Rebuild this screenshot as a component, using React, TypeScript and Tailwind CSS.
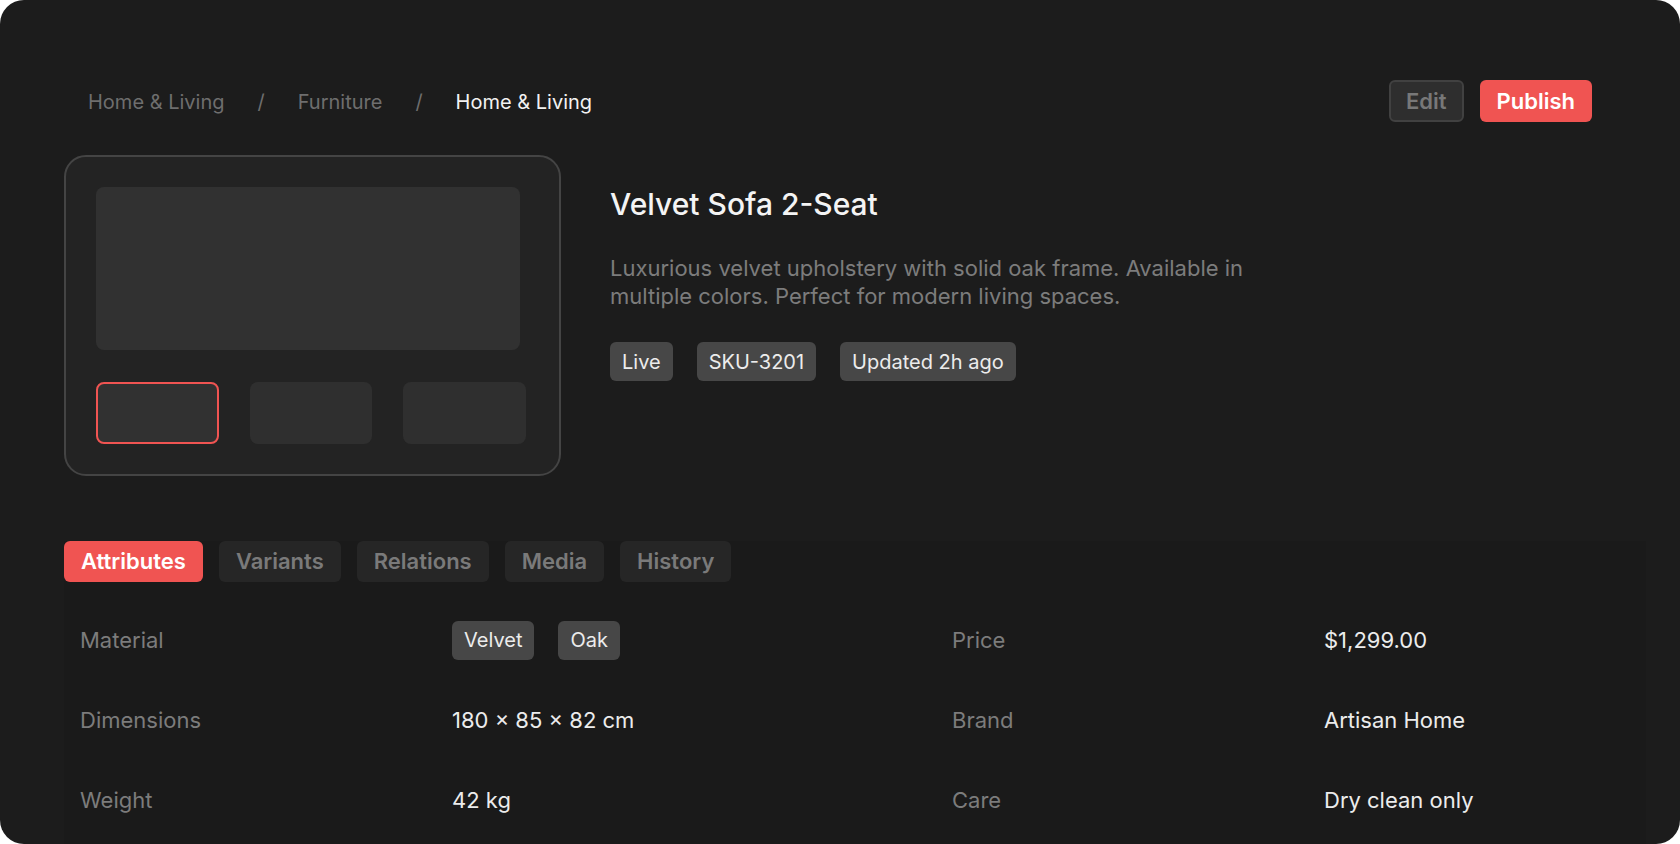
import React from "react";

const font = { fontFamily: "Inter, 'Noto Sans', sans-serif" };

function Tag({ children }: { children: React.ReactNode }) {
  return (
    <span className="inline-flex h-[39px] items-center rounded-[6px] bg-[#474747] px-3 text-[20px] text-[#ececec]">
      {children}
    </span>
  );
}

const rows = [
  { l1: "Material", v1: <div className="flex gap-6"><Tag>Velvet</Tag><Tag>Oak</Tag></div>, l2: "Price", v2: "$1,299.00" },
  { l1: "Dimensions", v1: "180 × 85 × 82 cm", l2: "Brand", v2: "Artisan Home" },
  { l1: "Weight", v1: "42 kg", l2: "Care", v2: "Dry clean only" },
];

export default function App() {
  return (
    <div className="h-[844px] w-[1680px] overflow-hidden bg-white" style={font}>
      <div className="flex h-full w-full flex-col overflow-hidden rounded-[24px] bg-[#1c1c1c] px-16 pt-[80px]">
        <div className="flex h-[42px] items-center justify-between">
          <div className="flex items-center gap-[33px] pl-6 pt-[2px] text-[20px]">
            <span className="text-[#6e6e6e]">Home &amp; Living</span>
            <span className="text-[#6e6e6e]">/</span>
            <span className="text-[#6e6e6e]">Furniture</span>
            <span className="text-[#6e6e6e]">/</span>
            <span className="text-[#f2f2f2]">Home &amp; Living</span>
          </div>
          <div className="flex items-center gap-4 pr-6">
            <button className="h-[42px] rounded-[6px] border-2 border-[#414141] bg-[#2e2e2e] px-[15px] text-[22px] font-semibold text-[#787878]">
              Edit
            </button>
            <button className="h-[42px] rounded-[6px] bg-[#f05452] px-[17px] text-[22px] font-semibold text-white">
              Publish
            </button>
          </div>
        </div>

        <div className="mt-[33px] flex gap-[49px]">
          <div className="flex w-[497px] flex-col gap-8 rounded-[22px] border-2 border-[#444444] bg-[#232323] p-[30px]">
            <div className="h-[163px] w-[424px] rounded-[8px] bg-[#313131]" />
            <div className="grid w-[430px] grid-cols-3 gap-[31px]">
              <div className="h-[62px] rounded-[8px] border-2 border-[#f05452] bg-[#313131]" />
              <div className="h-[62px] rounded-[8px] bg-[#2f2f2f]" />
              <div className="h-[62px] rounded-[8px] bg-[#2f2f2f]" />
            </div>
          </div>
          <div className="flex flex-col gap-8 pt-[31px]">
            <h1 className="text-[30px] font-medium leading-[36px] text-[#f4f4f4]">Velvet Sofa 2-Seat</h1>
            <p className="w-[680px] text-[22px] leading-[28px] text-[#7c7c7c]">
              Luxurious velvet upholstery with solid oak frame. Available in multiple colors. Perfect for modern living spaces.
            </p>
            <div className="flex gap-6">
              <Tag>Live</Tag>
              <Tag>SKU-3201</Tag>
              <Tag>Updated 2h ago</Tag>
            </div>
          </div>
        </div>

        <div className="mt-[65px] mr-[-30px] flex-1 bg-[#1a1a1a]">
          <div className="flex gap-4">
            <button className="h-[41px] rounded-[6px] bg-[#f05452] px-[17px] text-[22px] font-semibold text-white">Attributes</button>
            <button className="h-[41px] rounded-[6px] bg-[#262626] px-[17px] text-[22px] font-semibold text-[#7a7a7a]">Variants</button>
            <button className="h-[41px] rounded-[6px] bg-[#262626] px-[17px] text-[22px] font-semibold text-[#7a7a7a]">Relations</button>
            <button className="h-[41px] rounded-[6px] bg-[#262626] px-[17px] text-[22px] font-semibold text-[#7a7a7a]">Media</button>
            <button className="h-[41px] rounded-[6px] bg-[#262626] px-[17px] text-[22px] font-semibold text-[#7a7a7a]">History</button>
          </div>
          <div className="mt-[18px] pl-4">
            {rows.map((r) => (
              <div key={r.l1} className="grid h-[80px] grid-cols-[372px_500px_372px_1fr] items-center text-[22px]">
                <div className="text-[#7c7c7c]">{r.l1}</div>
                <div className="text-[#ececec]">{r.v1}</div>
                <div className="text-[#7c7c7c]">{r.l2}</div>
                <div className="text-[#ececec]">{r.v2}</div>
              </div>
            ))}
          </div>
        </div>
      </div>
    </div>
  );
}
